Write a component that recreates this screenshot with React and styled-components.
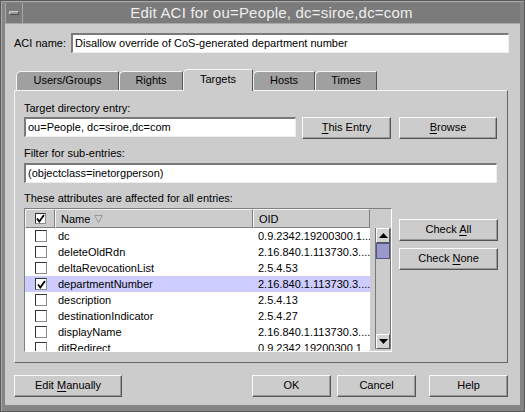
import React from 'react';
import styled, { createGlobalStyle } from 'styled-components';

const Global = createGlobalStyle`
  html, body { margin: 0; padding: 0; background: #cccccc; }
  body { font-family: "Liberation Sans", Arial, sans-serif; font-size: 11px; color: #000; }
  * { box-sizing: border-box; }
`;

const Frame = styled.div`
  width: 525px;
  height: 412px;
  background: #858585;
  border: 1px solid #5a5a5a;
  box-shadow: inset 1px 1px #a8a8a8;
  padding: 2px 4px 6px 4px;
  display: flex;
  flex-direction: column;
`;

const TitleBar = styled.div`
  height: 21px;
  display: flex;
  background: #7b7b7b;
  border-bottom: 1px solid #a8a8a8;
`;

const MenuBtn = styled.div`
  width: 18px;
  border-right: 1px solid #a8a8a8;
  border-left: 1px solid #a8a8a8;
  display: flex;
  align-items: center;
  justify-content: center;
`;

const MenuBar = styled.div`
  width: 10px;
  height: 4px;
  background: #9a9a9a;
  border-top: 1px solid #d0d0d0;
  border-left: 1px solid #d0d0d0;
  border-bottom: 1px solid #4a4a4a;
  border-right: 1px solid #4a4a4a;
`;

const Title = styled.div`
  flex: 1;
  text-align: center;
  color: #eeeeee;
  font-size: 15px;
  line-height: 20px;
  letter-spacing: 0.2px;
`;

const Body = styled.div`
  flex: 1;
  background: #cccccc;
  padding: 9px 11px 0 9px;
  display: flex;
  flex-direction: column;
`;

const Row = styled.div`
  display: flex;
  align-items: ${p => p.$align || 'center'};
  gap: ${p => p.$gap || 0}px;
`;

const Label = styled.div`
  line-height: 14px;
  white-space: nowrap;
  flex: none;
  width: ${p => (p.$w ? p.$w + 'px' : 'auto')};
  margin-top: ${p => p.$mt || 0}px;
  margin-bottom: ${p => p.$mb || 0}px;
`;

const Input = styled.div`
  width: ${p => (p.$w ? p.$w + 'px' : 'auto')};
  flex: ${p => (p.$grow ? '1 1 auto' : 'none')};
  height: 20px;
  background: #fff;
  border-top: 2px solid #7a7a7a;
  border-left: 2px solid #7a7a7a;
  border-bottom: 1px solid #eeeeee;
  border-right: 1px solid #eeeeee;
  padding-left: 2px;
  line-height: 17px;
  white-space: nowrap;
  overflow: hidden;
`;

const Tabs = styled.div`
  margin-top: 17px;
  height: 20px;
  padding-left: 2px;
  display: flex;
  align-items: flex-end;
  position: relative;
  z-index: 1;
`;

const Tab = styled.div`
  width: ${p => p.$w}px;
  height: ${p => (p.$active ? 22 : 19)}px;
  margin-bottom: ${p => (p.$active ? -1 : 0)}px;
  background: ${p => (p.$active ? '#cccccc' : '#a0a0a0')};
  border-top: 1px solid #f4f4f4;
  border-left: 1px solid #f4f4f4;
  border-right: 1px solid #555;
  border-top-left-radius: 5px;
  text-align: center;
  line-height: ${p => (p.$active ? 19 : 17)}px;
`;

const Panel = styled.div`
  height: 273px;
  flex: none;
  margin-right: 1px;
  border-top: 1px solid #f4f4f4;
  border-left: 1px solid #f4f4f4;
  border-right: 1px solid #666;
  border-bottom: 1px solid #666;
  padding: 10px 10px 0 9px;
  display: flex;
  flex-direction: column;
`;

const Button = styled.div`
  width: ${p => p.$w}px;
  height: 22px;
  margin-left: ${p => p.$ml || 0}px;
  background: #cccccc;
  border-top: 1px solid #fafafa;
  border-left: 1px solid #fafafa;
  border-bottom: 1px solid #555;
  border-right: 1px solid #555;
  box-shadow: inset -1px -1px #9a9a9a;
  text-align: center;
  line-height: 19px;
  flex: none;
  u { text-decoration: underline; text-underline-offset: 2px; }
`;

const Pane = styled.div`
  width: 369px;
  height: 144px;
  border-top: 1px solid #808080;
  border-left: 1px solid #808080;
  border-right: 1px solid #fff;
  border-bottom: 1px solid #fff;
  display: flex;
  flex-direction: column;
  background: #cccccc;
`;

const Header = styled.div`
  height: 19px;
  display: flex;
`;

const HeadCell = styled.div`
  width: ${p => p.$w}px;
  height: 19px;
  background: #cccccc;
  border-top: 1px solid #f4f4f4;
  border-left: 1px solid #f4f4f4;
  border-right: 1px solid #808080;
  border-bottom: 1px solid #808080;
  display: flex;
  align-items: center;
  justify-content: ${p => (p.$center ? 'center' : 'flex-start')};
  padding-left: ${p => p.$pl || 0}px;
  gap: 4px;
`;

const TableBody = styled.div`
  flex: 1;
  display: flex;
  gap: 5px;
`;

const Viewport = styled.div`
  width: 345px;
  height: 123px;
  background: #fff;
  overflow: hidden;
`;

const DataRow = styled.div`
  height: 16px;
  display: flex;
  align-items: center;
  background: ${p => (p.$sel ? '#ccccff' : '#fff')};
`;

const Cell = styled.div`
  width: ${p => p.$w}px;
  flex: none;
  padding-left: ${p => p.$pl || 0}px;
  white-space: nowrap;
  overflow: hidden;
  display: flex;
  align-items: center;
`;

const Box = styled.div`
  width: ${p => p.$s}px;
  height: ${p => p.$s}px;
  background: #fff;
  border-top: 1px solid #333;
  border-left: 1px solid #333;
  border-right: 1px solid #8a8a8a;
  border-bottom: 1px solid #8a8a8a;
  display: flex;
  align-items: center;
  justify-content: center;
`;

const ScrollBar = styled.div`
  width: 16px;
  height: 121px;
  display: flex;
  flex-direction: column;
  background: #cccccc;
  border-left: 1px solid #777;
  border-right: 1px solid #777;
`;

const Arrow = styled.div`
  height: 15px;
  background: #d4d4d4;
  border-top: 1px solid #fff;
  border-left: 1px solid #fff;
  border-bottom: 1px solid #555;
  border-right: 1px solid #555;
  display: flex;
  align-items: center;
  justify-content: center;
`;

const Thumb = styled.div`
  height: 16px;
  border: 1px solid #55558a;
  background-color: #9999cc;
  background-image: radial-gradient(#c8c8ee 0.6px, transparent 0.7px);
  background-size: 2px 2px;
`;

const Track = styled.div`
  flex: 1;
`;

const Side = styled.div`
  display: flex;
  flex-direction: column;
  margin-left: 7px;
  padding-top: 11px;
  gap: 7px;
`;

const Footer = styled.div`
  margin-top: 12px;
  display: flex;
  margin-right: 1px;
`;

const Check = () => (
  <svg width="9" height="9" viewBox="0 0 9 9">
    <path d="M1 4.5 L3.3 7.5 L8 1" fill="none" stroke="#000" strokeWidth="1.8" />
  </svg>
);

const SortIcon = () => (
  <svg width="9" height="8" viewBox="0 0 9 8">
    <path d="M0.5 0.5 H8.5 L4.5 7.5 Z" fill="none" stroke="#9a9a9a" strokeWidth="1" />
  </svg>
);

const Tri = ({ down }) => (
  <svg width="9" height="5" viewBox="0 0 9 5">
    <path d={down ? 'M0 0 H9 L4.5 5 Z' : 'M0 5 H9 L4.5 0 Z'} fill="#000" />
  </svg>
);

const rows = [
  ['dc', '0.9.2342.19200300.1...'],
  ['deleteOldRdn', '2.16.840.1.113730.3....'],
  ['deltaRevocationList', '2.5.4.53'],
  ['departmentNumber', '2.16.840.1.113730.3....', true],
  ['description', '2.5.4.13'],
  ['destinationIndicator', '2.5.4.27'],
  ['displayName', '2.16.840.1.113730.3....'],
  ['ditRedirect', '0.9.2342.19200300.1...'],
];

const tabs = [
  ['Users/Groups', 103],
  ['Rights', 64],
  ['Targets', 70, true],
  ['Hosts', 62],
  ['Times', 62],
];

export default function App() {
  return (
    <>
      <Global />
      <Frame>
        <TitleBar>
          <MenuBtn><MenuBar /></MenuBtn>
          <Title>Edit ACI for ou=People, dc=siroe,dc=com</Title>
        </TitleBar>
        <Body>
          <Row $gap={5}>
            <Label $w={52}>ACI name:</Label>
            <Input $grow>Disallow override of CoS-generated department number</Input>
          </Row>
          <Tabs>
            {tabs.map(([t, w, a]) => (
              <Tab key={t} $w={w} $active={a}>{t}</Tab>
            ))}
          </Tabs>
          <Panel>
            <Label $mb={2}>Target directory entry:</Label>
            <Row $align="flex-start">
              <Input $w={272}>ou=People, dc=siroe,dc=com</Input>
              <Button $w={89} $ml={6}><u>T</u>his Entry</Button>
              <Button $w={98} $ml={8}><u>B</u>rowse</Button>
            </Row>
            <Label $mt={7} $mb={3}>Filter for sub-entries:</Label>
            <Input>(objectclass=inetorgperson)</Input>
            <Label $mt={8} $mb={3}>These attributes are affected for all entries:</Label>
            <Row $align="flex-start">
              <Pane>
                <Header>
                  <HeadCell $w={30} $center>
                    <Box $s={11}><Check /></Box>
                  </HeadCell>
                  <HeadCell $w={198} $pl={5}>Name <SortIcon /></HeadCell>
                  <HeadCell $w={117} $pl={5}>OID</HeadCell>
                </Header>
                <TableBody>
                  <Viewport>
                    {rows.map(([n, o, sel]) => (
                      <DataRow key={n} $sel={sel}>
                        <Cell $w={30} $pl={10}>
                          <Box $s={12}>{sel && <Check />}</Box>
                        </Cell>
                        <Cell $w={198} $pl={3}>{n}</Cell>
                        <Cell $w={117} $pl={5}>{o}</Cell>
                      </DataRow>
                    ))}
                  </Viewport>
                  <ScrollBar>
                    <Arrow><Tri /></Arrow>
                    <Thumb />
                    <Track />
                    <Arrow><Tri down /></Arrow>
                  </ScrollBar>
                </TableBody>
              </Pane>
              <Side>
                <Button $w={99}>Check <u>A</u>ll</Button>
                <Button $w={99}>Check <u>N</u>one</Button>
              </Side>
            </Row>
          </Panel>
          <Footer>
            <Button $w={108}>Edit <u>M</u>anually</Button>
            <Button $w={79} $ml={130}>OK</Button>
            <Button $w={79} $ml={6}>Cancel</Button>
            <Button $w={79} $ml={13}>Help</Button>
          </Footer>
        </Body>
      </Frame>
    </>
  );
}
